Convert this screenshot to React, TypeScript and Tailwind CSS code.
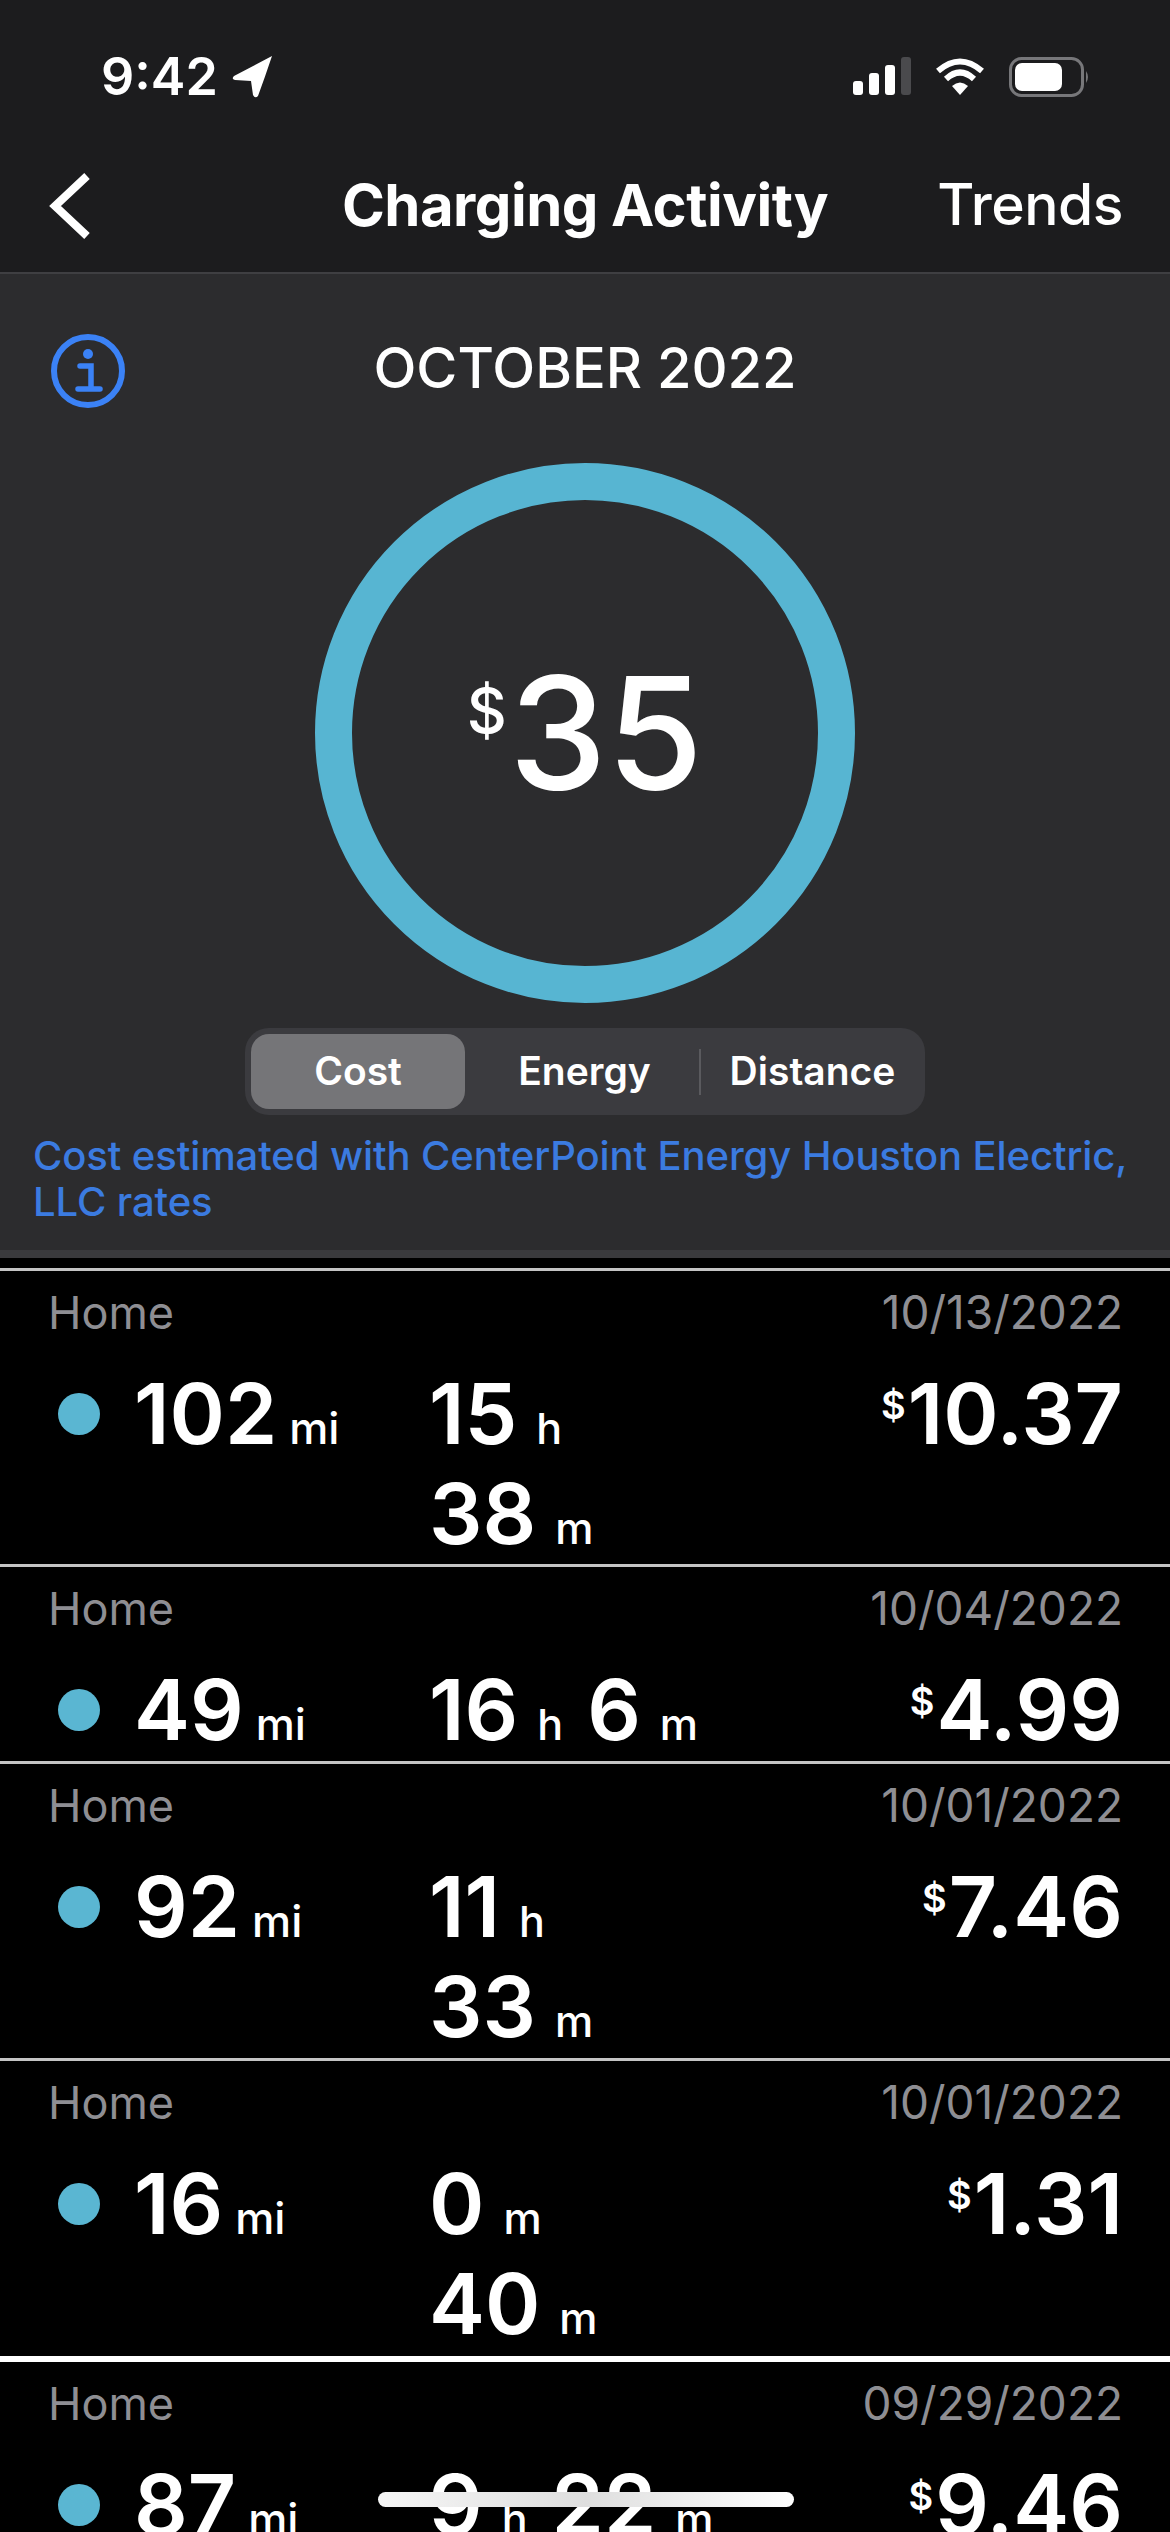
const rows = [
  { date: "10/13/2022", mi: "102", t: [["15", "h"], ["38", "m"]], stacked: true, cost: "10.37", h: "h-[296px]", line: "border-t-[3px] border-[#c4c4c4]" },
  { date: "10/04/2022", mi: "49", t: [["16", "h"], ["6", "m"]], stacked: false, cost: "4.99", h: "h-[197px]", line: "border-t-[3px] border-[#c4c4c4]" },
  { date: "10/01/2022", mi: "92", t: [["11", "h"], ["33", "m"]], stacked: true, cost: "7.46", h: "h-[297px]", line: "border-t-[3px] border-[#c4c4c4]" },
  { date: "10/01/2022", mi: "16", t: [["0", "m"], ["40", "m"]], stacked: true, cost: "1.31", h: "h-[298px]", line: "border-t-[3px] border-[#c4c4c4]" },
  { date: "09/29/2022", mi: "87", t: [["9", "h"], ["22", "m"]], stacked: false, cost: "9.46", h: "h-[197px]", line: "border-t-[6px] border-white" },
];

function Row({ r }: { r: (typeof rows)[number] }) {
  return (
    <div className={`${r.h} ${r.line} shrink-0 pt-[13px] pr-[47px] pl-[48px]`}>
      <div className="flex items-baseline justify-between text-[#8e8e93]">
        <span className="text-[45px] leading-[56px]">Home</span>
        <span className="text-[46px] leading-[56px]">{r.date}</span>
      </div>
      <div className="mt-[23px] flex items-start">
        <div className="mt-[29px] ml-[10px] h-[42px] w-[42px] rounded-full bg-[#5ab6d2]" />
        <div className="ml-[34px] flex w-[295px] items-baseline text-[84px] leading-[100px] font-semibold text-white">
          <span>{r.mi}</span>
          <span className="ml-[12px] text-[44px] leading-none font-medium">mi</span>
        </div>
        <div className={`flex ${r.stacked ? "flex-col" : "flex-row gap-[24px]"}`}>
          {r.t.map(([v, u], i) => (
            <div key={i} className="flex h-[100px] items-baseline text-[84px] leading-[100px] font-semibold text-white">
              <span>{v}</span>
              <span className="ml-[19px] text-[43px] leading-none font-medium">{u}</span>
            </div>
          ))}
        </div>
        <div className="ml-auto flex items-start text-[84px] leading-[100px] font-semibold text-white">
          <span className="mt-[21px] mr-[2px] text-[38px] leading-[40px]">$</span>
          <span>{r.cost}</span>
        </div>
      </div>
    </div>
  );
}

export default function App() {
  return (
    <div className="relative flex h-[2532px] w-[1170px] flex-col overflow-hidden bg-black font-['Inter','Liberation_Sans',sans-serif]">
      <div className="h-[274px] shrink-0 border-b-[2px] border-[#3f3f42] bg-[#1c1c1e]">
        <div className="flex h-[150px] items-start justify-between pt-[52px] pr-[79px] pl-[101px]">
          <div className="flex items-center gap-[13px]">
            <span className="text-[52px] leading-[50px] font-semibold text-white">9:42</span>
            <svg width="42" height="44" viewBox="0 0 42 44"><path d="M41 1 L3 21 Q0 24 4 25 L20 26 L22 40 Q24 44 27 41 Q34 22 41 1 Z" fill="#fff" /></svg>
          </div>
          <div className="flex items-center gap-[24px] pt-[5px]">
            <svg width="58" height="40" viewBox="0 0 58 40">
              <rect x="0" y="24" width="10" height="14" rx="3" fill="#fff" />
              <rect x="16" y="16" width="10" height="22" rx="3" fill="#fff" />
              <rect x="32" y="8" width="10" height="30" rx="3" fill="#fff" />
              <rect x="48" y="0" width="10" height="38" rx="3" fill="#4a4a4d" />
            </svg>
            <svg width="50" height="38" viewBox="0 0 50 38">
              <path d="M3 13 Q25 -6 47 13" fill="none" stroke="#fff" strokeWidth="6" />
              <path d="M11 21 Q25 8 39 21" fill="none" stroke="#fff" strokeWidth="6" />
              <path d="M17 28 L25 37 L33 28 Q25 21 17 28 Z" fill="#fff" />
            </svg>
            <svg width="82" height="40" viewBox="0 0 82 40">
              <rect x="1.5" y="1.5" width="72" height="37" rx="11" fill="none" stroke="#77777a" strokeWidth="3" />
              <rect x="6" y="6" width="47" height="28" rx="7" fill="#fff" />
              <path d="M77 14 Q81 20 77 26 Z" fill="#77777a" />
            </svg>
          </div>
        </div>
        <div className="relative flex h-[122px] items-start justify-center pt-[23px]">
          <svg className="absolute top-[22px] left-[46px]" width="46" height="68" viewBox="0 0 46 68">
            <path d="M41 4 L9 34 L41 64" fill="none" stroke="#fff" strokeWidth="8" />
          </svg>
          <span className="text-[58px] leading-[64px] font-bold tracking-[-0.5px] text-white">Charging Activity</span>
          <span className="absolute top-[23px] right-[47px] text-[57px] leading-[64px] font-medium tracking-[-0.5px] text-white">Trends</span>
        </div>
      </div>
      <div className="relative flex h-[984px] shrink-0 flex-col items-center border-b-[8px] border-[#3a3a3d] bg-[#2c2c2e]">
        <svg className="absolute top-[59px] left-[50px]" width="76" height="76" viewBox="0 0 76 76">
          <circle cx="38" cy="38" r="34" fill="none" stroke="#3b82f6" strokeWidth="6" />
          <circle cx="38" cy="21" r="5" fill="#3b82f6" />
          <path d="M30 33 H41 V54 M28 56 H50" fill="none" stroke="#3b82f6" strokeWidth="5.5" strokeLinecap="round" />
        </svg>
        <div className="mt-[62px] text-[56px] leading-[64px] font-medium text-white">OCTOBER 2022</div>
        <div className="relative mt-[63px] flex h-[540px] w-[540px] items-center justify-center rounded-full border-[37px] border-[#57b5d2]">
          <div className="flex items-start text-white">
            <span className="mt-[28px] mr-[2px] text-[62px] leading-[70px] font-medium">$</span>
            <span className="text-[156px] leading-[170px] font-medium">35</span>
          </div>
        </div>
        <div className="mt-[25px] flex h-[87px] w-[680px] items-center rounded-[24px] bg-[#3b3b3f] px-[6px] text-[39px] font-semibold text-white">
          <div className="flex h-[75px] w-[214px] items-center justify-center rounded-[18px] bg-[#757578]">Cost</div>
          <div className="ml-[5px] flex h-[75px] w-[229px] items-center justify-center">Energy</div>
          <div className="h-[46px] w-[2px] bg-[#5a5a5e]" />
          <div className="ml-[5px] flex h-[75px] flex-1 items-center justify-center">Distance</div>
        </div>
        <div className="mt-[18px] w-full px-[33px] text-[40px] leading-[46px] font-medium tracking-[-0.1px] text-[#3b7be0]">
          Cost estimated with CenterPoint Energy Houston Electric, LLC rates
        </div>
      </div>
      <div className="h-[10px] shrink-0" />
      {rows.map((r, i) => (
        <Row key={i} r={r} />
      ))}
      <div className="absolute bottom-[25px] left-[378px] h-[15px] w-[416px] rounded-full bg-linear-to-r from-[#f6f6f6] via-[#dedede] to-white" />
    </div>
  );
}
